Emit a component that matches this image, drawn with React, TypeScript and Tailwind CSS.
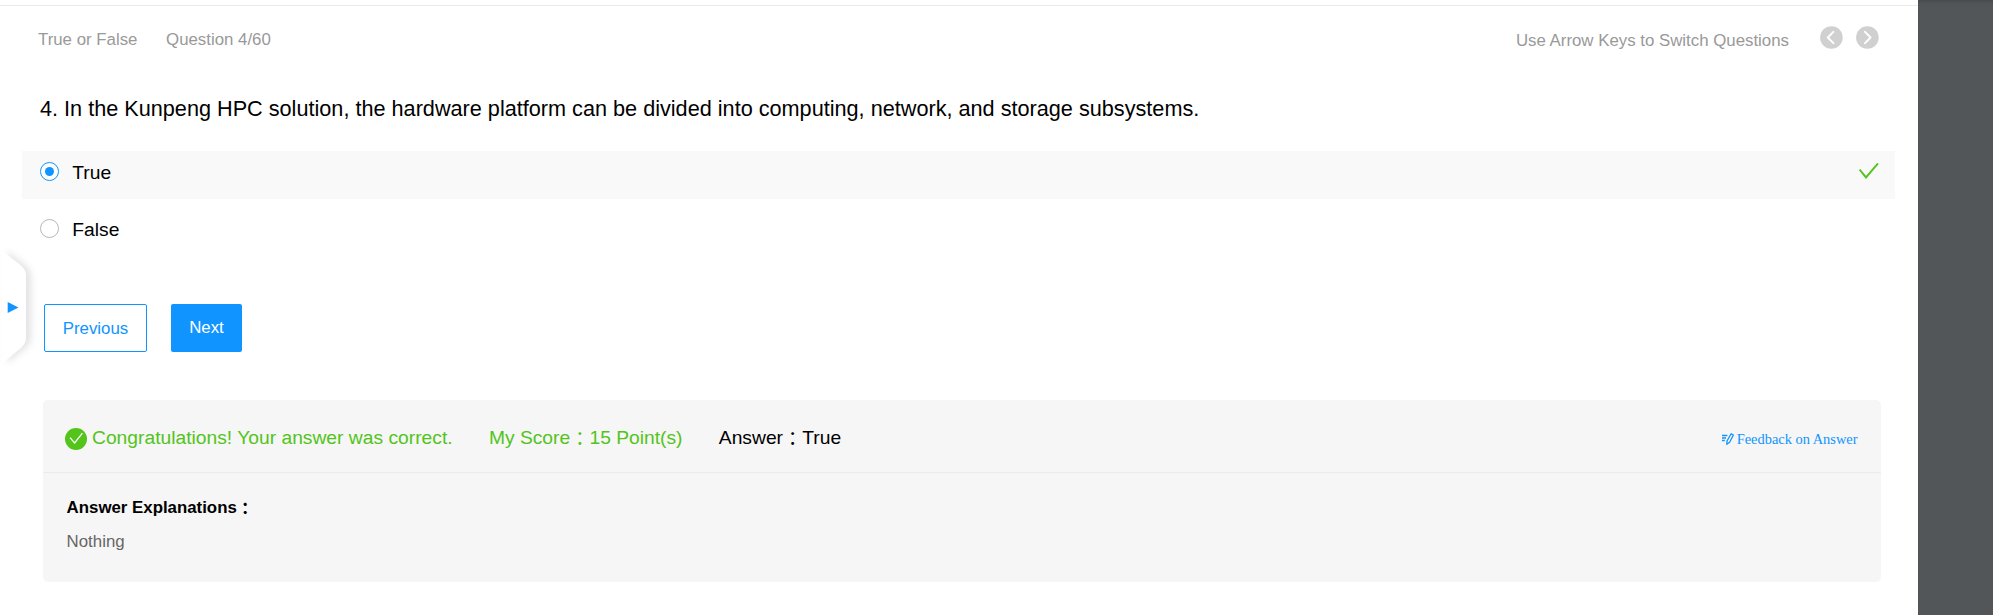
import React from "react";

const sans = "font-['Liberation_Sans','Noto_Sans_CJK_TC',sans-serif]";

function ArrowCircle({ flip = false }: { flip?: boolean }) {
  return (
    <svg width="23" height="23" viewBox="0 0 23 23" className="block" aria-hidden="true">
      <circle cx="11.4" cy="11.5" r="11.3" fill="#d0d0d0" />
      <path
        d={flip ? "M9 5.8 L14.6 11.5 L9 17.2" : "M13.4 5.8 L7.8 11.5 L13.4 17.2"}
        fill="none"
        stroke="#fff"
        strokeWidth="1.9"
        strokeLinecap="round"
        strokeLinejoin="round"
      />
    </svg>
  );
}

function Colon() {
  return <span className="relative top-[2px]">：</span>;
}

function Option({ label, selected = false }: { label: string; selected?: boolean }) {
  return (
    <label className={`flex h-12 items-start pl-[18px] pr-4 ${selected ? "bg-[#f9f9f9]" : ""}`}>
      <span
        className={`mt-[11px] flex size-[19px] items-center justify-center rounded-full border bg-white ${
          selected ? "border-[#1094ff]" : "border-[#b8b8b8]"
        }`}
      >
        {selected && <span className="size-[9px] rounded-full bg-[#1094ff]" />}
      </span>
      <span className="ml-[13.3px] mt-[10px] text-[19.25px] leading-6 text-black">{label}</span>
      {selected && (
        <svg width="20" height="16" viewBox="0 0 20 16" className="ml-auto mt-3 block" aria-hidden="true">
          <path d="M0.6 6.6 L7 14.4 L19 0.4" fill="none" stroke="#52c41a" strokeWidth="1.9" />
        </svg>
      )}
    </label>
  );
}

export default function App() {
  return (
    <div className={`flex h-[615px] w-[1993px] overflow-hidden bg-white ${sans}`}>
      <main className="relative flex w-[1918px] flex-col pt-[5px]">
        <header className="flex h-[89px] items-start border-t border-[#ebebeb] pl-[38px] pr-[39px] text-[16.83px] leading-6 text-[#999]">
          <span className="mt-[22px]">True or False</span>
          <span className="ml-[28.6px] mt-[22px]">Question 4/60</span>
          <span className="ml-auto mt-[23px]">Use Arrow Keys to Switch Questions</span>
          <div className="ml-[30.5px] mt-5 flex gap-[13.5px]">
            <ArrowCircle />
            <ArrowCircle flip />
          </div>
        </header>

        <h1 className="h-[57px] pl-10 text-[21.66px] leading-[30px] text-black">
          4. In the Kunpeng HPC solution, the hardware platform can be divided into computing, network, and storage
          subsystems.
        </h1>

        <div className="ml-[22px] mr-[23px] flex flex-col gap-[9px]">
          <Option label="True" selected />
          <Option label="False" />
        </div>

        <div className="mt-12 flex h-12 gap-6 pl-[44px] text-[16.83px]">
          <button className="flex w-[103px] justify-center rounded-[2px] border border-[#1094ff] bg-white pt-[12px] leading-6 text-[#1094ff]">
            Previous
          </button>
          <button className="flex w-[71px] justify-center rounded-[2px] bg-[#1094ff] pt-[12px] leading-6 text-white">
            Next
          </button>
        </div>

        <section className="ml-[43px] mr-[37px] mt-12 h-[182px] rounded-[5px] bg-[#f6f6f6]">
          <div className="flex h-[73px] items-start border-b border-[#ebebeb] pl-[22px] pr-[23.5px] text-[19.25px] leading-6">
            <svg width="22" height="22" viewBox="0 0 22 22" className="mt-7 block" aria-hidden="true">
              <circle cx="11" cy="11" r="11" fill="#52c41a" />
              <path d="M5 9.6 L9.6 15 L17.4 5.2" fill="none" stroke="#fff" strokeWidth="1.3" />
            </svg>
            <span className="ml-[5px] mt-[26px] text-[#52c41a]">Congratulations! Your answer was correct.</span>
            <span className="ml-[36.3px] mt-[26px] text-[#52c41a]">
              My Score
              <Colon />
              15 Point(s)
            </span>
            <span className="ml-[36.3px] mt-[26px] text-black">
              Answer
              <Colon />
              True
            </span>
            <a className="ml-auto mt-[27px] flex items-center gap-[3px] font-['Liberation_Serif',serif] text-[14.42px] text-[#1094ff]">
              <svg
                width="12"
                height="12"
                viewBox="0 0 12 12"
                fill="none"
                stroke="#1094ff"
                strokeWidth="1.3"
                strokeLinejoin="round"
                aria-hidden="true"
              >
                <path d="M0 2.5H5.4M0 5H4M0 7.5H2.8" />
                <path d="M9.1 0.8 L11.4 2 L7.6 9.2 L4.8 11.3 L5 8 Z" />
              </svg>
              Feedback on Answer
            </a>
          </div>
          <div className="pl-[23.6px] pt-[23px] text-[16.83px] leading-6">
            <div className="font-bold text-black">
              Answer Explanations
              <Colon />
            </div>
            <div className="mt-[10px] text-[#666]">Nothing</div>
          </div>
        </section>

        <div className="absolute left-0 top-[245px]">
          <svg width="50" height="130" viewBox="0 0 50 130" className="block" aria-hidden="true">
            <defs>
              <filter id="tab-shadow" x="-50%" y="-20%" width="220%" height="140%">
                <feDropShadow dx="5" dy="0" stdDeviation="3.5" floodColor="#000" floodOpacity="0.11" />
              </filter>
            </defs>
            <path
              d="M2 6 L20 20 Q26 25 26 32 V92 Q26 98 20.5 103 L2 118 Z"
              fill="#fff"
              filter="url(#tab-shadow)"
            />
            <path d="M7.7 57 L18.5 62.5 L7.7 68 Z" fill="#1094ff" />
          </svg>
        </div>
      </main>
      <aside className="flex-1 bg-[#525659] shadow-[inset_0_4px_4px_-3px_rgba(0,0,0,0.18)]" />
    </div>
  );
}
